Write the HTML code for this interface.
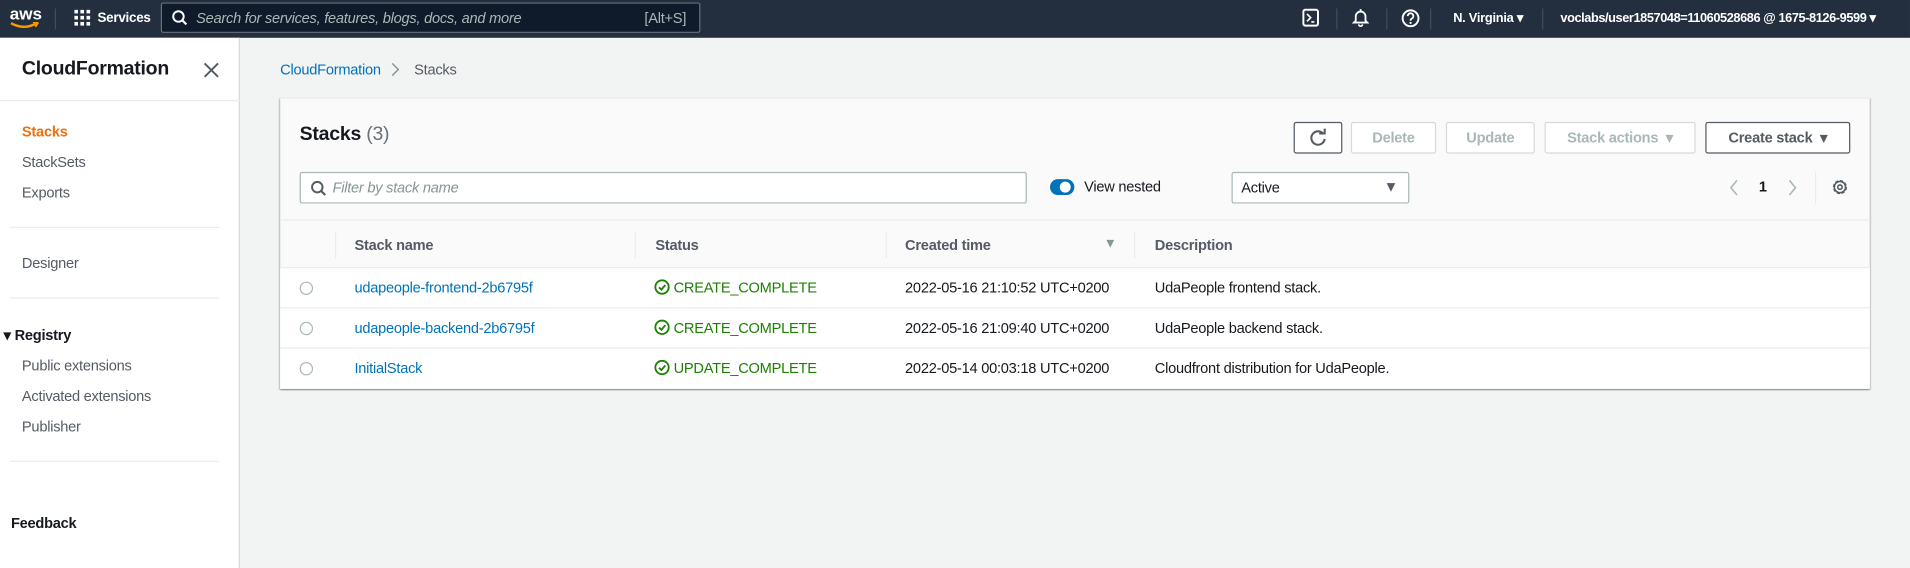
<!DOCTYPE html>
<html><head><meta charset="utf-8"><style>
*{box-sizing:border-box;margin:0;padding:0}
html,body{width:1910px;height:568px;overflow:hidden;background:#f2f3f3}
#w{width:1568px;height:466px;transform:scale(1.2181,1.2189);transform-origin:0 0;position:relative;font-family:"Liberation Sans",sans-serif;font-size:12px;color:#16191f;letter-spacing:-0.2px}
.a{position:absolute;white-space:nowrap}
#top{position:absolute;left:0;top:0;width:1568px;height:31px;background:#232f3e;color:#fff}
#side{position:absolute;left:0;top:31px;width:197px;height:435px;background:#fff;border-right:1px solid #d5dbdb}
.hr{position:absolute;height:1px;background:#eaeded}
.card{position:absolute;left:230px;top:80px;width:1305px;height:239px;background:#fafafa;box-shadow:0 1px 1px rgba(0,28,36,.3),1px 1px 1px rgba(0,28,36,.15),-1px 1px 1px rgba(0,28,36,.15);border-top:1px solid #eaeded}
.btn{position:absolute;top:19px;height:26px;border:1px solid #d5dbdb;background:#fff;color:#aab7b8;font-weight:bold;text-align:center;line-height:24px;border-radius:2px}
.row{position:absolute;left:0;width:1305px;height:33px;background:#fff;border-top:1px solid #eaeded}
.lk{color:#0073bb}
.ok{color:#1d8102}
.ok svg{vertical-align:-2px;margin-right:3px}
.rd{position:absolute;left:16px;top:11px;width:11px;height:11px;border:1px solid #aab7b8;border-radius:50%}
.th{font-weight:bold;color:#545b64;top:13px}
.vd{position:absolute;top:9px;width:1px;height:22px;background:#eaeded}
</style></head><body><div id="w">
<div id="top">
 <div class="a" style="left:8px;top:3px;font-size:14px;font-weight:bold;letter-spacing:0">aws</div>
 <svg class="a" style="left:8px;top:18px" width="24" height="7"><path d="M1 1 Q12 7 22 1" stroke="#ff9900" stroke-width="2" fill="none"/><path d="M19 0 L23 1 L21 4" stroke="#ff9900" stroke-width="1.5" fill="none"/></svg>
 <div class="a" style="left:45px;top:7px;width:1px;height:17px;background:#414d5c"></div>
 <svg class="a" style="left:61px;top:8px" width="14" height="14" fill="#fff"><rect x="0" y="0" width="3" height="3"/><rect x="5" y="0" width="3" height="3"/><rect x="10" y="0" width="3" height="3"/><rect x="0" y="5" width="3" height="3"/><rect x="5" y="5" width="3" height="3"/><rect x="10" y="5" width="3" height="3"/><rect x="0" y="10" width="3" height="3"/><rect x="5" y="10" width="3" height="3"/><rect x="10" y="10" width="3" height="3"/></svg>
 <div class="a" style="left:80px;top:9px;font-size:11px;font-weight:bold">Services</div>
 <div class="a" style="left:132px;top:2px;width:443px;height:25px;border:1px solid #687078;background:#0f1b2a;border-radius:2px"></div>
 <svg class="a" style="left:141px;top:8px" width="13" height="13"><circle cx="5.5" cy="5.5" r="4.3" stroke="#fff" stroke-width="1.6" fill="none"/><path d="M8.6 8.6L12 12" stroke="#fff" stroke-width="1.8"/></svg>
 <div class="a" style="left:161px;top:8px;font-style:italic;color:#aab7b8;font-size:12px">Search for services, features, blogs, docs, and more</div>
 <div class="a" style="left:529px;top:8px;color:#aab7b8;font-size:12px">[Alt+S]</div>
 <svg class="a" style="left:1069px;top:7px" width="15" height="16"><rect x="1" y="1" width="12" height="13" rx="1.5" stroke="#fff" stroke-width="1.6" fill="none"/><path d="M4 4.5L7 7.5L4 10.5M7.5 11H10" stroke="#fff" stroke-width="1.4" fill="none"/></svg>
 <div class="a" style="left:1097px;top:7px;width:1px;height:17px;background:#414d5c"></div>
 <svg class="a" style="left:1110px;top:6px" width="14" height="17"><path d="M7 1.5V3M3 11V7.5a4 4 0 0 1 8 0V11l1.5 1.5H1.5Z" stroke="#fff" stroke-width="1.5" fill="none"/><path d="M5.5 14a1.5 1.5 0 0 0 3 0" stroke="#fff" stroke-width="1.4" fill="none"/></svg>
 <div class="a" style="left:1138px;top:7px;width:1px;height:17px;background:#414d5c"></div>
 <svg class="a" style="left:1150px;top:7px" width="16" height="16"><circle cx="8" cy="8" r="6.5" stroke="#fff" stroke-width="1.6" fill="none"/><path d="M5.7 6.2a2.3 2.3 0 1 1 3.2 2.1c-.8.4-.9.8-.9 1.6" stroke="#fff" stroke-width="1.5" fill="none"/><circle cx="8" cy="11.8" r=".9" fill="#fff"/></svg>
 <div class="a" style="left:1174px;top:7px;width:1px;height:17px;background:#414d5c"></div>
 <div class="a" style="left:1193px;top:9px;font-size:10.5px;font-weight:bold">N. Virginia ▾</div>
 <div class="a" style="left:1266px;top:7px;width:1px;height:17px;background:#414d5c"></div>
 <div class="a" style="left:1281px;top:9px;font-size:10.5px;font-weight:bold;letter-spacing:-0.35px">voclabs/user1857048=11060528686 @ 1675-8126-9599 ▾</div>
</div>
<div id="side">
 <div class="a" style="left:18px;top:17px;font-size:16px;font-weight:bold">CloudFormation</div>
 <svg class="a" style="left:167px;top:20px" width="13" height="13"><path d="M1 1L12 12M12 1L1 12" stroke="#545b64" stroke-width="1.6"/></svg>
 <div class="hr" style="left:0;top:51px;width:197px"></div>
 <div class="a" style="left:18px;top:70px;color:#ec7211;font-weight:bold">Stacks</div>
 <div class="a" style="left:18px;top:95px;color:#545b64">StackSets</div>
 <div class="a" style="left:18px;top:120px;color:#545b64">Exports</div>
 <div class="hr" style="left:8px;top:155px;width:172px"></div>
 <div class="a" style="left:18px;top:178px;color:#545b64">Designer</div>
 <div class="hr" style="left:8px;top:213px;width:172px"></div>
 <div class="a" style="left:3px;top:237px;font-weight:bold">▾ Registry</div>
 <div class="a" style="left:18px;top:262px;color:#545b64">Public extensions</div>
 <div class="a" style="left:18px;top:287px;color:#545b64">Activated extensions</div>
 <div class="a" style="left:18px;top:312px;color:#545b64">Publisher</div>
 <div class="hr" style="left:8px;top:347px;width:172px"></div>
 <div class="a" style="left:9px;top:391px;font-weight:bold">Feedback</div>
</div>
<div class="a lk" style="left:230px;top:50px">CloudFormation</div>
<svg class="a" style="left:321px;top:51px" width="8" height="12"><path d="M1 1L6 6L1 11" stroke="#879596" stroke-width="1.2" fill="none"/></svg>
<div class="a" style="left:340px;top:50px;color:#545b64">Stacks</div>
<div class="card">
 <div class="a" style="left:16px;top:21px;font-size:16px;font-weight:bold">Stacks <span style="font-weight:normal;color:#687078">(3)</span></div>
 <div class="btn" style="left:832px;width:40px;border-color:#545b64"><svg width="16" height="16" style="margin-top:4px"><path d="M12.5 5A5.5 5.5 0 1 0 13.5 9" stroke="#545b64" stroke-width="1.7" fill="none"/><path d="M9 4.5h4.5V0.5" stroke="#545b64" stroke-width="1.7" fill="none"/></svg></div>
 <div class="btn" style="left:879px;width:70px">Delete</div>
 <div class="btn" style="left:957px;width:73px">Update</div>
 <div class="btn" style="left:1038px;width:124px">Stack actions &nbsp;▾</div>
 <div class="btn" style="left:1170px;width:119px;border-color:#545b64;color:#545b64">Create stack &nbsp;▾</div>
 <div class="a" style="left:16px;top:60px;width:597px;height:26px;background:#fff;border:1px solid #aab7b8;border-radius:2px"></div>
 <svg class="a" style="left:25px;top:67px" width="13" height="13"><circle cx="5.5" cy="5.5" r="4.3" stroke="#545b64" stroke-width="1.6" fill="none"/><path d="M8.6 8.6L12 12" stroke="#545b64" stroke-width="1.8"/></svg>
 <div class="a" style="left:43px;top:66px;font-style:italic;color:#879596">Filter by stack name</div>
 <div class="a" style="left:632px;top:66px;width:20px;height:13px;border-radius:7px;background:#0073bb"></div>
 <div class="a" style="left:640px;top:68px;width:9px;height:9px;border-radius:50%;background:#fff"></div>
 <div class="a" style="left:660px;top:65px;color:#16191f">View nested</div>
 <div class="a" style="left:781px;top:60px;width:146px;height:26px;background:#fff;border:1px solid #aab7b8;border-radius:2px"></div>
 <div class="a" style="left:789px;top:66px">Active</div>
 <div class="a" style="left:906px;top:65px;color:#545b64">▼</div>
 <svg class="a" style="left:1190px;top:66px" width="8" height="14"><path d="M6 1L1 7L6 13" stroke="#aab7b8" stroke-width="1.3" fill="none"/></svg>
 <div class="a" style="left:1214px;top:65px;font-weight:bold">1</div>
 <svg class="a" style="left:1238px;top:66px" width="8" height="14"><path d="M1 1L6 7L1 13" stroke="#aab7b8" stroke-width="1.3" fill="none"/></svg>
 <div class="a" style="left:1260px;top:60px;width:1px;height:26px;background:#eaeded"></div>
 <svg class="a" style="left:1273px;top:65px" width="15" height="15"><circle cx="7.5" cy="7.5" r="5" stroke="#545b64" stroke-width="1.6" fill="none" stroke-dasharray="2.6 1.3"/><circle cx="7.5" cy="7.5" r="4.6" stroke="#545b64" stroke-width="1.2" fill="none"/><circle cx="7.5" cy="7.5" r="1.8" stroke="#545b64" stroke-width="1.3" fill="none"/></svg>
 <div class="a" style="left:0;top:99px;width:1305px;height:1px;background:#eaeded"></div>
 <div class="a" style="left:0;top:100px;width:1305px;height:39px">
  <div class="vd" style="left:45px"></div>
  <div class="a th" style="left:61px">Stack name</div>
  <div class="vd" style="left:291px"></div>
  <div class="a th" style="left:308px">Status</div>
  <div class="vd" style="left:497px"></div>
  <div class="a th" style="left:513px">Created time</div>
  <div class="a" style="left:676px;top:13px;color:#879596;font-size:11px">▼</div>
  <div class="vd" style="left:701px"></div>
  <div class="a th" style="left:718px">Description</div>
 </div>
 <div class="row" style="top:138px"><div class="rd"></div><div class="a lk" style="left:61px;top:9px">udapeople-frontend-2b6795f</div><div class="a ok" style="left:307px;top:9px"><svg width="13" height="13"><circle cx="6.5" cy="6.5" r="5.5" stroke="#1d8102" stroke-width="1.5" fill="none"/><path d="M4 6.7L6 8.6L9.2 4.8" stroke="#1d8102" stroke-width="1.5" fill="none"/></svg>CREATE_COMPLETE</div><div class="a" style="left:513px;top:9px">2022-05-16 21:10:52 UTC+0200</div><div class="a" style="left:718px;top:9px">UdaPeople frontend stack.</div></div>
 <div class="row" style="top:171px"><div class="rd"></div><div class="a lk" style="left:61px;top:9px">udapeople-backend-2b6795f</div><div class="a ok" style="left:307px;top:9px"><svg width="13" height="13"><circle cx="6.5" cy="6.5" r="5.5" stroke="#1d8102" stroke-width="1.5" fill="none"/><path d="M4 6.7L6 8.6L9.2 4.8" stroke="#1d8102" stroke-width="1.5" fill="none"/></svg>CREATE_COMPLETE</div><div class="a" style="left:513px;top:9px">2022-05-16 21:09:40 UTC+0200</div><div class="a" style="left:718px;top:9px">UdaPeople backend stack.</div></div>
 <div class="row" style="top:204px;height:34px"><div class="rd"></div><div class="a lk" style="left:61px;top:9px">InitialStack</div><div class="a ok" style="left:307px;top:9px"><svg width="13" height="13"><circle cx="6.5" cy="6.5" r="5.5" stroke="#1d8102" stroke-width="1.5" fill="none"/><path d="M4 6.7L6 8.6L9.2 4.8" stroke="#1d8102" stroke-width="1.5" fill="none"/></svg>UPDATE_COMPLETE</div><div class="a" style="left:513px;top:9px">2022-05-14 00:03:18 UTC+0200</div><div class="a" style="left:718px;top:9px">Cloudfront distribution for UdaPeople.</div></div>
</div>
</div></body></html>
